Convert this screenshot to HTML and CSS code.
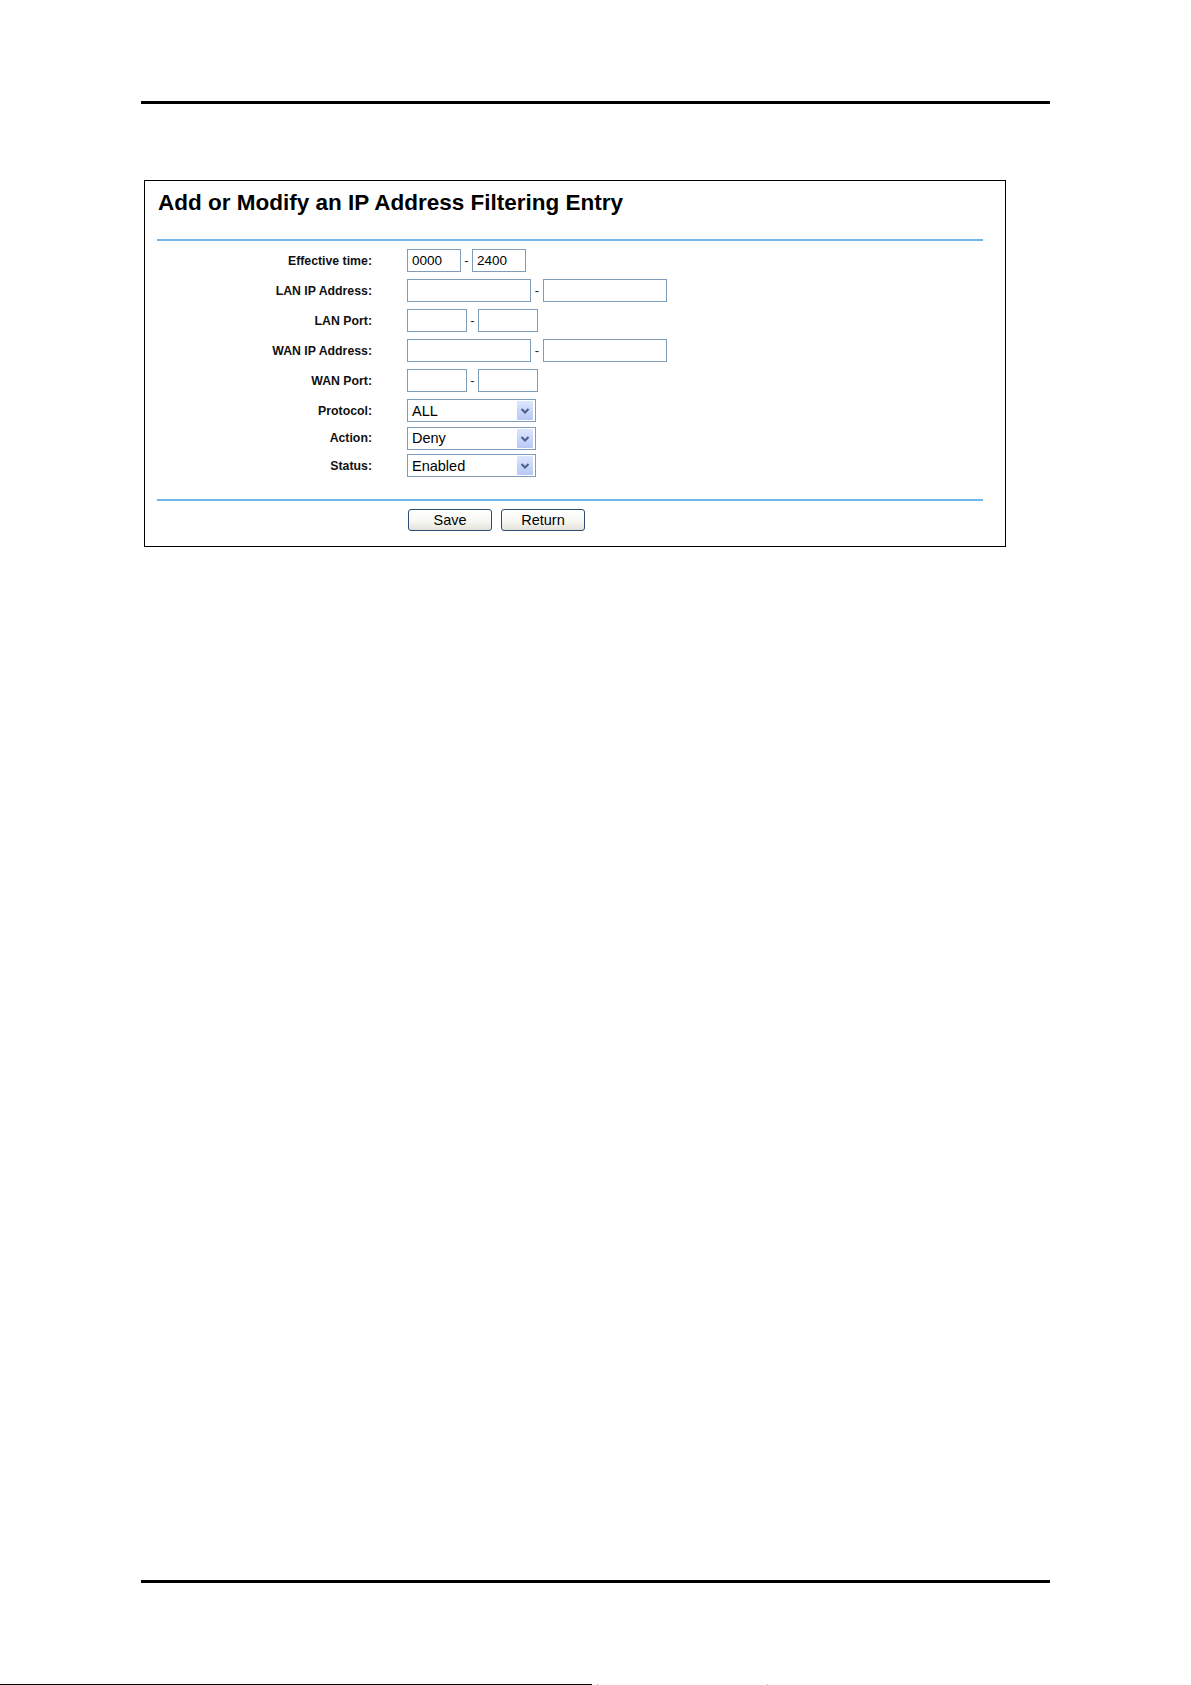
FILE: index.html
```html
<!DOCTYPE html>
<html lang="en">
<head>
<meta charset="utf-8">
<title>Add or Modify an IP Address Filtering Entry</title>
<link rel="stylesheet" href="styles.css">
</head>
<body>
<div class="page">
  <div class="rule"></div>
  <div class="panel">
    <h1 class="title">Add or Modify an IP Address Filtering Entry</h1>
    <div class="blue-line"></div>
    <div class="form">
      <div class="row">
        <span class="label">Effective time:</span>
        <div class="controls">
          <input class="field w-time" type="text" value="0000">
          <span class="dash">-</span>
          <input class="field w-time" type="text" value="2400">
        </div>
      </div>
      <div class="row">
        <span class="label">LAN IP Address:</span>
        <div class="controls">
          <input class="field w-ip" type="text" value="">
          <span class="dash dash-ip">-</span>
          <input class="field w-ip" type="text" value="">
        </div>
      </div>
      <div class="row">
        <span class="label">LAN Port:</span>
        <div class="controls">
          <input class="field w-port" type="text" value="">
          <span class="dash">-</span>
          <input class="field w-port" type="text" value="">
        </div>
      </div>
      <div class="row">
        <span class="label">WAN IP Address:</span>
        <div class="controls">
          <input class="field w-ip" type="text" value="">
          <span class="dash dash-ip">-</span>
          <input class="field w-ip" type="text" value="">
        </div>
      </div>
      <div class="row">
        <span class="label">WAN Port:</span>
        <div class="controls">
          <input class="field w-port" type="text" value="">
          <span class="dash">-</span>
          <input class="field w-port" type="text" value="">
        </div>
      </div>
      <div class="row sel-row">
        <span class="label">Protocol:</span>
        <div class="controls">
          <div class="select">
            <select class="select-input"><option>ALL</option><option>TCP</option><option>UDP</option><option>ICMP</option></select>
            <span class="select-btn"><svg width="16" height="19" viewBox="0 0 16 19"><polyline points="4.5,8 8,11.5 11.5,8" fill="none" stroke="#4a5f86" stroke-width="2"/></svg></span>
          </div>
        </div>
      </div>
      <div class="row sel-row">
        <span class="label">Action:</span>
        <div class="controls">
          <div class="select">
            <select class="select-input"><option>Deny</option><option>Allow</option></select>
            <span class="select-btn"><svg width="16" height="19" viewBox="0 0 16 19"><polyline points="4.5,8 8,11.5 11.5,8" fill="none" stroke="#4a5f86" stroke-width="2"/></svg></span>
          </div>
        </div>
      </div>
      <div class="row sel-row">
        <span class="label">Status:</span>
        <div class="controls">
          <div class="select">
            <select class="select-input"><option>Enabled</option><option>Disabled</option></select>
            <span class="select-btn"><svg width="16" height="19" viewBox="0 0 16 19"><polyline points="4.5,8 8,11.5 11.5,8" fill="none" stroke="#4a5f86" stroke-width="2"/></svg></span>
          </div>
        </div>
      </div>
    </div>
    <div class="blue-line blue-line-2"></div>
    <div class="buttons">
      <button class="btn" type="button">Save</button>
      <button class="btn" type="button">Return</button>
    </div>
  </div>
  <div class="rule rule-bottom"></div>
  <div class="footer-line">
    <span class="seg"></span>
    <span class="mark mark-1"></span>
    <span class="mark mark-2"></span>
  </div>
</div>
</body>
</html>
```
FILE: styles.css
```css
html, body {
  margin: 0;
  padding: 0;
  background: #fff;
}
body {
  font-family: "Liberation Sans", Arial, sans-serif;
  color: #000;
  overflow: hidden;
}
.page {
  width: 1191px;
  height: 1685px;
  box-sizing: border-box;
  padding-top: 101px;
  display: flex;
  flex-direction: column;
}
.rule {
  margin-left: 141px;
  width: 909px;
  height: 3px;
  background: #000;
  flex: none;
}
.rule-bottom {
  margin-top: 1033px;
}
.panel {
  margin-top: 76px;
  margin-left: 144px;
  width: 862px;
  height: 367px;
  box-sizing: border-box;
  border: 1px solid #000;
  padding: 9px 22px 0 12px;
  flex: none;
}
.title {
  margin: 0;
  padding-left: 1px;
  font-size: 22.5px;
  line-height: 26px;
  font-weight: bold;
  color: #000;
}
.blue-line {
  height: 2px;
  background: #72b7ec;
  margin-top: 23px;
}
.blue-line-2 {
  margin-top: 22px;
}
.form {
  margin-top: 8px;
  display: flex;
  flex-direction: column;
}
.row {
  display: flex;
  align-items: center;
  height: 23px;
  margin-bottom: 7px;
}
.row.sel-row {
  margin-bottom: 4.5px;
}
.row:last-child {
  margin-bottom: 0;
}
.label {
  width: 215px;
  flex: none;
  text-align: right;
  font-size: 12.3px;
  font-weight: bold;
  color: #111;
  margin-right: 35px;
  white-space: nowrap;
}
.controls {
  display: flex;
  align-items: center;
}
.field {
  box-sizing: border-box;
  height: 23px;
  margin: 0;
  border: 1px solid #7f9db9;
  padding: 0 4px;
  font-family: "Liberation Sans", Arial, sans-serif;
  font-size: 13.5px;
  color: #000;
  background: #fff;
  outline: none;
}
.w-time { width: 54px; }
.w-ip { width: 124px; }
.w-port { width: 60px; }
.dash {
  width: 11px;
  text-align: center;
  font-size: 13px;
  color: #222;
}
.dash-ip {
  width: 12px;
}
.select {
  box-sizing: border-box;
  width: 129px;
  height: 23px;
  border: 1px solid #7f9db9;
  background: #fff;
  display: flex;
  align-items: center;
}
.select-input {
  flex: 1;
  min-width: 0;
  height: 21px;
  border: 0;
  margin: 0;
  padding: 0 0 0 4px;
  background: transparent;
  -webkit-appearance: none;
  appearance: none;
  font-family: "Liberation Sans", Arial, sans-serif;
  font-size: 14.5px;
  color: #000;
  outline: none;
}
.select-btn {
  width: 16px;
  height: 19px;
  margin-right: 2px;
  display: flex;
  background: linear-gradient(180deg, #dde6fd 0%, #c8d5f9 55%, #b8c8f4 100%);
  border-radius: 1px;
  flex: none;
}
.select-btn svg {
  display: block;
}
.buttons {
  margin-top: 8px;
  padding-left: 251px;
  display: flex;
  gap: 9px;
}
.btn {
  box-sizing: border-box;
  width: 84px;
  height: 22px;
  margin: 0;
  padding: 0;
  border: 1px solid #2e4d72;
  border-radius: 3px;
  background: linear-gradient(180deg, #ffffff 0%, #f6f6f2 60%, #e3e1d8 100%);
  font-family: "Liberation Sans", Arial, sans-serif;
  font-size: 14.5px;
  color: #000;
  line-height: 20px;
}
.footer-line {
  margin-top: 101px;
  height: 1px;
  display: flex;
  flex: none;
}
.seg {
  width: 592px;
  height: 1px;
  background: #000;
}
.mark {
  width: 1px;
  height: 1px;
  background: #5cc6d8;
}
.mark-1 { margin-left: 5px; }
.mark-2 { margin-left: 169px; background: #d6c25a; }
```
